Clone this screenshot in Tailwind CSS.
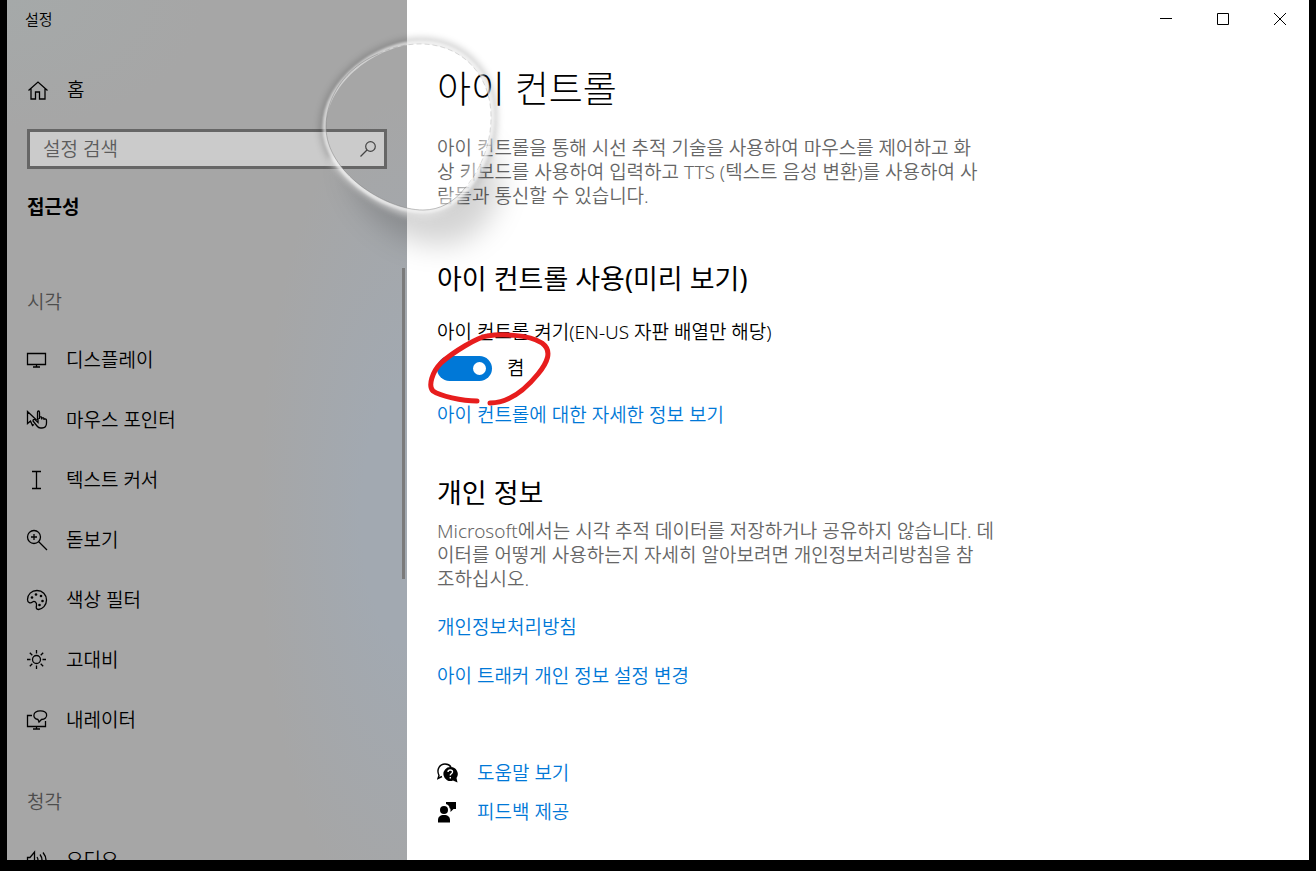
<!DOCTYPE html>
<html lang="ko">
<head>
  <meta charset="UTF-8">
  <meta name="viewport" content="width=device-width, initial-scale=1.0">
  <title>설정</title>
  <script src="https://cdn.jsdelivr.net/npm/@tailwindcss/browser@4"></script>
</head>
<body class="bg-black font-['Noto_Sans','Noto_Sans_CJK_KR',sans-serif] text-[19px] leading-6 text-black">
  <div class="relative h-screen px-[7px] pb-[11px]">
    <div class="flex h-full overflow-hidden bg-white">

      <!-- Sidebar -->
      <aside class="relative flex w-[400px] shrink-0 flex-col overflow-hidden bg-[#a6a6a6] bg-[radial-gradient(ellipse_150px_420px_at_100%_60%,#a2a9b1_30%,transparent_100%),radial-gradient(ellipse_200px_130px_at_0%_0%,#a5a9a9,transparent)]">
        <div class="flex h-[38px] shrink-0 items-center pl-[18px] text-[15px] font-[350]">설정</div>

        <a href="#" class="mt-[22px] flex h-[60px] shrink-0 items-center gap-[19px] pl-5 font-[350]">
          <svg class="size-[21px]" viewBox="0 0 21 21" fill="none" stroke="currentColor" stroke-width="1.3"><path d="M1.5 10.5 11 2l9.5 8.5M4 8.5V19h4.500v-7h4v7H18V8.500"/></svg>
          홈
        </a>

        <div class="mx-5 mt-[9px] flex h-10 shrink-0 items-center border-[3px] border-[#666] bg-[#cbcbcb] pr-2 pl-[13px]">
          <input type="text" aria-label="설정 검색" placeholder="설정 검색" class="min-w-0 flex-1 bg-transparent font-[350] outline-none placeholder:text-[#5c5c5c]">
          <button type="button" aria-label="검색" class="text-[#444]">
            <svg class="size-4" viewBox="0 0 16 16" fill="none" stroke="currentColor" stroke-width="1.2"><circle cx="10.500" cy="5.500" r="4.800"/><path d="M7 9 .5 15.500"/></svg>
          </button>
        </div>

        <h2 class="mt-2 flex h-[60px] shrink-0 items-center pl-5 font-bold">접근성</h2>

        <nav class="mt-8 min-h-0 flex-1 overflow-hidden pt-[5px] font-[350]">
          <h3 class="flex h-14 items-center pl-5 text-[#4d4d4d]">시각</h3>
          <a href="#" class="flex h-[60px] items-center gap-[18px] pl-[19px]">
            <svg class="size-[22px]" viewBox="0 0 22 22" fill="none" stroke="currentColor" stroke-width="1.3"><path d="M1.500 4.500h18v11h-18zM10.500 15.500v2.500M7 18h7"/></svg>
            디스플레이
          </a>
          <a href="#" class="flex h-[60px] items-center gap-[18px] pl-[19px]">
            <svg class="size-[22px]" viewBox="0 0 22 22" fill="none" stroke="currentColor" stroke-width="1.3"><path d="M10.500 11 1.500 2.500v12l3-2.500 2 4.500 1.500-1M11.500 11V3.500q0-1.500 1-1.500t1 1.500V10M13.500 8q2.200-.7 2.200 1v1.500M15.700 9q2.300-.7 2.300 1v1M18 10q2.500-.5 2.500 1.500V14q0 5-4.500 5h-1.500q-2 0-3.500-2l-4-5q0-2 2-1.500l3 3V9"/></svg>
            마우스 포인터
          </a>
          <a href="#" class="flex h-[60px] items-center gap-[18px] pl-[19px]">
            <svg class="size-[22px]" viewBox="0 0 22 22" fill="none" stroke="currentColor" stroke-width="1.3"><path d="M6 2.500h9M6 19.500h9M10.500 2.500v17"/></svg>
            텍스트 커서
          </a>
          <a href="#" class="flex h-[60px] items-center gap-[18px] pl-[19px]">
            <svg class="size-[22px]" viewBox="0 0 22 22" fill="none" stroke="currentColor" stroke-width="1.3"><circle cx="8" cy="8" r="6.500"/><path d="M8 5v6M5 8h6M12.500 12.500l8.500 8.500"/></svg>
            돋보기
          </a>
          <a href="#" class="flex h-[60px] items-center gap-[18px] pl-[19px]">
            <svg class="size-[22px]" viewBox="0 0 22 22" fill="none" stroke="currentColor" stroke-width="1.3"><path d="M1.500 10.500c0-5 4-9 9.500-9s9.500 4 9.500 9.500-4 9-8 9.500c-2.500 0-2.500-2-2-4 .5-3-2-5-4-3.500C4.500 14.500 1.500 14 1.500 10.500z"/><g fill="currentColor" stroke="none"><circle cx="6" cy="8.500" r="1.300"/><circle cx="10" cy="5.500" r="1.300"/><circle cx="15" cy="7" r="1.300"/><circle cx="16.500" cy="12" r="1.300"/><circle cx="13.500" cy="16" r="1.300"/></g></svg>
            색상 필터
          </a>
          <a href="#" class="flex h-[60px] items-center gap-[18px] pl-[19px]">
            <svg class="size-[22px]" viewBox="0 0 22 22" fill="none" stroke="currentColor" stroke-width="1.3"><circle cx="10.500" cy="10.500" r="4"/><path d="M10.500 1v3.500M10.500 16.500V20M1 10.500h3.500M16.500 10.500H20M3.800 3.800l2.500 2.500M14.700 14.700l2.500 2.500M17.200 3.800l-2.500 2.500M6.300 14.700l-2.500 2.500"/></svg>
            고대비
          </a>
          <a href="#" class="flex h-[60px] items-center gap-[18px] pl-[19px]">
            <svg class="size-[22px]" viewBox="0 0 22 22" fill="none" stroke="currentColor" stroke-width="1.3"><path d="M6 6.500H1.500v11h18V12M10.500 17.500v2M7 20h7M12 10.500C8.500 10 7.500 7.500 8 5.500c1-4.500 11-5 12.500-.5 1 3.500-2 5.500-5 5.500L13 13z"/></svg>
            내레이터
          </a>

          <h3 class="mt-6 flex h-14 items-center pl-5 text-[#4d4d4d]">청각</h3>
          <a href="#" class="flex h-[60px] items-center gap-[18px] pl-[19px]">
            <svg class="size-[22px]" viewBox="0 0 22 22" fill="none" stroke="currentColor" stroke-width="1.3"><path d="M1.500 8.500H4L8.500 3v16L4 14.500H1.500zM11 8q2 3 0 6M14 5.500q4 5.500 0 11M17 3.500q6 7.500 0 15"/></svg>
            오디오
          </a>
        </nav>

        <div class="absolute top-[268px] right-[2px] h-[311px] w-[3px] bg-[#7b7b7b]"></div>
      </aside>

      <!-- Content -->
      <main class="min-w-0 flex-1">
        <div class="flex h-[38px] justify-end pr-px">
          <button type="button" aria-label="최소화" class="flex w-[57px] items-center justify-center"><svg class="size-3" viewBox="0 0 12 12" stroke="currentColor"><path d="M0 5.500h12"/></svg></button>
          <button type="button" aria-label="최대화" class="flex w-[57px] items-center justify-center"><svg class="size-3" viewBox="0 0 12 12" fill="none" stroke="currentColor"><path d="M.5.500h11v11H.5z"/></svg></button>
          <button type="button" aria-label="닫기" class="flex w-[57px] items-center justify-center"><svg class="size-3" viewBox="0 0 12 12" stroke="currentColor"><path d="M0 0l12 12M12 0 0 12"/></svg></button>
        </div>

        <div class="px-[30px] font-[350]">
          <h1 class="mt-[27px] text-[37px] leading-[48px] font-light">아이 컨트롤</h1>
          <p class="mt-[23px] max-w-[546px] text-[#666]">아이 컨트롤을 통해 시선 추적 기술을 사용하여 마우스를 제어하고 화상 키보드를 사용하여 입력하고 TTS (텍스트 음성 변환)를 사용하여 사람들과 통신할 수 있습니다.</p>

          <h2 class="mt-[55px] text-[27px] leading-[32px] font-normal">아이 컨트롤 사용(미리 보기)</h2>
          <p id="eye-label" class="mt-[25px]">아이 컨트롤 켜기(EN-US 자판 배열만 해당)</p>
          <label class="mt-[11px] flex h-[26px] w-fit items-center gap-[15px]">
            <input type="checkbox" role="switch" aria-labelledby="eye-label" checked class="peer sr-only">
            <span class="flex h-[25px] w-[55px] items-center rounded-full bg-[#0078d7] px-1.5 peer-checked:justify-end"><span class="size-[13px] rounded-full bg-white"></span></span>
            켬
          </label>
          <a href="#" class="mt-[22px] block w-fit text-[#0078d7]">아이 컨트롤에 대한 자세한 정보 보기</a>

          <h2 class="mt-[50px] text-[27px] leading-[32px] font-normal">개인 정보</h2>
          <p class="mt-[10px] max-w-[562px] text-[#666]">Microsoft에서는 시각 추적 데이터를 저장하거나 공유하지 않습니다. 데이터를 어떻게 사용하는지 자세히 알아보려면 개인정보처리방침을 참<br>조하십시오.</p>
          <a href="#" class="mt-6 block w-fit text-[#0078d7]">개인정보처리방침</a>
          <a href="#" class="mt-[25px] block w-fit text-[#0078d7]">아이 트래커 개인 정보 설정 변경</a>

          <a href="#" class="mt-[73px] flex w-fit items-center gap-[19px] text-[#0078d7]">
            <svg class="size-[21px]" viewBox="0 0 21 21"><path d="M5 13.500 1 15.500l1-3C-1 6 3 1 8 1c3 0 5 1.500 6 3" fill="none" stroke="#000" stroke-width="1.4"/><path d="M13.500 4a7 7 0 1 0 2.500 13.500l4.500 2-1-4.500A7 7 0 0 0 13.500 4z" fill="#000"/><path d="M11 9q0-2 2.300-2t2.200 2q0 1-1.500 2-.7.500-.7 1.500M13.300 14v1.500" fill="none" stroke="#fff" stroke-width="1.4"/></svg>
            도움말 보기
          </a>
          <a href="#" class="mt-[15px] flex w-fit items-center gap-[19px] text-[#0078d7]">
            <svg class="size-[21px]" viewBox="0 0 21 21" fill="#000"><circle cx="7" cy="8" r="4"/><path d="M1 20.500V18c0-3 2-5 6-5s6 2 6 5v2.500zM9 0h10v7h-2.500l-3 3V7l-1-1c0-2-1-3-3.500-4z"/></svg>
            피드백 제공
          </a>
        </div>
      </main>
    </div>

    <!-- Glass bubble that follows the gaze -->
    <svg class="pointer-events-none absolute top-[20px] left-[290px] h-[260px] w-[250px]" viewBox="290 20 250 260" fill="none">
      <defs>
        <path id="bubble" d="M326 127C326 82 378 44 420 44C462 44 491 75 491 117C491 160 463 210 423 210C385 210 326 172 326 127Z"/>
        <mask id="outside" maskUnits="userSpaceOnUse" x="290" y="20" width="250" height="260"><path fill="#fff" d="M290 20h250v260H290z"/><use href="#bubble" fill="#000"/></mask>
        <clipPath id="inside"><use href="#bubble"/></clipPath>
        <filter id="blur-lg" x="-50%" y="-50%" width="200%" height="200%"><feGaussianBlur stdDeviation="14"/></filter>
        <filter id="blur-md" x="-50%" y="-50%" width="200%" height="200%"><feGaussianBlur stdDeviation="3"/></filter>
        <filter id="blur-sm" x="-50%" y="-50%" width="200%" height="200%"><feGaussianBlur stdDeviation="1"/></filter>
      </defs>
      <g mask="url(#outside)">
        <path d="M350 175C350 140 390 125 425 125C465 125 495 150 500 180C500 215 475 245 440 245C400 245 360 215 350 175Z" fill="#000" fill-opacity=".17" filter="url(#blur-lg)"/>
        <use href="#bubble" stroke="#000" stroke-opacity=".16" stroke-width="14" filter="url(#blur-md)"/>
        <use href="#bubble" stroke="#fff" stroke-opacity=".6" stroke-width="7" filter="url(#blur-sm)"/>
        <path d="M487 145C473 190 450 214 423 214C390 212 350 185 334 160" stroke="#fff" stroke-opacity=".6" stroke-width="9" stroke-linecap="round" filter="url(#blur-md)"/>
      </g>
      <g clip-path="url(#inside)">
        <path d="M491 110C491 160 463 210 423 210" stroke="#fff" stroke-opacity=".5" stroke-width="16" filter="url(#blur-md)"/>
      </g>
      <path d="M378 54C345 68 326 97 326 127C326 172 385 210 423 210C440 210 454 202 465 188" stroke="#777" stroke-opacity=".45"/>
      <path d="M378 54C392 47 406 44 420 44C462 44 491 75 491 117C491 142 482 168 465 188" stroke="#777" stroke-opacity=".25" stroke-dasharray="5 3"/>
    </svg>

    <!-- Pen mark round the switch -->
    <svg class="pointer-events-none absolute top-[325px] left-[420px] h-[90px] w-[140px]" viewBox="420 325 140 90" fill="none" stroke="#e71d1d" stroke-width="5" stroke-linecap="round" stroke-linejoin="round">
      <path d="M477 401C462 401 440 396 433 391C428 386 432 372 441 363C453 352 478 337 487 336C500 334 528 334 542 343C553 351 547 363 538 374C525 390 508 403 490 403"/>
    </svg>
  </div>
</body>
</html>
